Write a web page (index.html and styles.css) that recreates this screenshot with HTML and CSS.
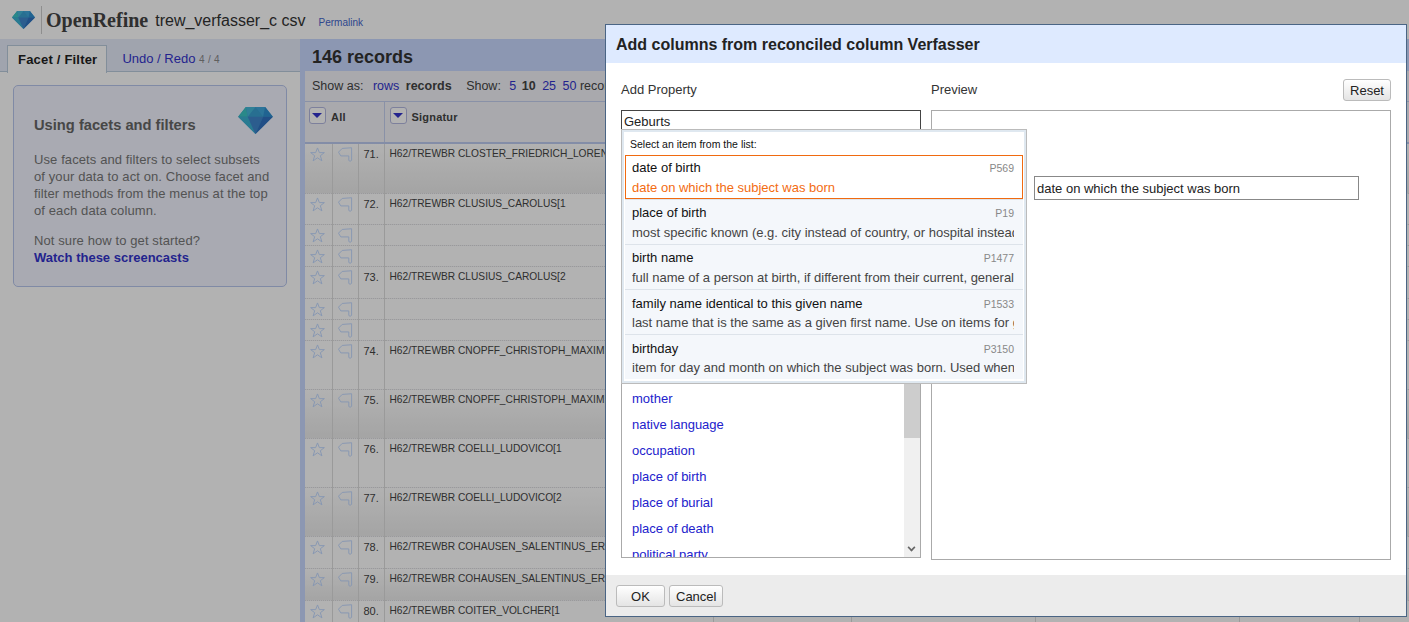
FILE: index.html
```html
<!DOCTYPE html>
<html lang="en">
<head>
    <meta charset="UTF-8">
    <meta name="viewport" content="width=device-width, initial-scale=1.0">
    <title>OpenRefine trew_verfasser_c csv</title>
    <link rel="stylesheet" href="styles.css">
</head>
<body>
    <svg class="defs" width="0" height="0">
        <symbol id="gem" viewBox="0 0 36 28">
            <path d="M8 0H28L36 10L18 28L0 10Z" fill="#3a9fd0"/>
            <path d="M8 0L0 10H10Z" fill="#3cc4c4"/>
            <path d="M8 0L10 10L18 0Z" fill="#45b8d8"/>
            <path d="M18 0L26 10L28 0Z" fill="#3fa6dc"/>
            <path d="M28 0L26 10H36Z" fill="#2f8fd0"/>
            <path d="M0 10H10L18 28Z" fill="#3cb0d0"/>
            <path d="M10 10H26L18 28Z" fill="#3f86cc"/>
            <path d="M26 10H36L18 28Z" fill="#3070c0"/>
        </symbol>
        <symbol id="star" viewBox="0 0 16 16">
            <path d="M8 1L10 6H15.300L11 9.300L12.700 14.800L8 11.500L3.300 14.800L5 9.300L.7 6H6Z" fill="none" stroke="currentColor"/>
        </symbol>
        <symbol id="flag" viewBox="0 0 16 16">
            <path d="M.5 5.500L4.500 1.500L14.500 .8V14C13.500 15.800 12 15.500 11.500 14V9.500H3L.5 5.500Z" fill="none" stroke="currentColor"/>
        </symbol>
    </svg>

    <div class="header">
        <svg class="logo-gem"><use href="#gem"/></svg>
        <span class="logo-text">OpenRefine</span>
        <span class="project-name">trew_verfasser_c csv</span>
        <a class="permalink" href="#">Permalink</a>
    </div>

    <div class="main">
        <div class="left-panel">
            <div class="tabs">
                <a class="tab tab-active" href="#">Facet / Filter</a>
                <a class="tab" href="#">Undo / Redo <span class="tab-count">4 / 4</span></a>
            </div>
            <div class="help-box">
                <svg class="help-gem"><use href="#gem"/></svg>
                <h2>Using facets and filters</h2>
                <p>Use facets and filters to select subsets of your data to act on. Choose facet and filter methods from the menus at the top of each data column.</p>
                <p class="help-last">Not sure how to get started?<br><a href="#">Watch these screencasts</a></p>
            </div>
        </div>

        <div class="right-panel">
            <div class="summary">146 records</div>
            <div class="inner">
                <div class="view-bar">
                    Show as: <a href="#">rows</a> <b>records</b>
                    <span class="view-show">Show: <a href="#">5</a> <b>10</b> <a href="#">25</a> <a href="#">50</a> records</span>
                </div>
                <table class="data-table">
                    <colgroup>
                        <col class="col-star"><col class="col-flag"><col class="col-num">
                        <col class="col-sig"><col class="col-b"><col class="col-c"><col class="col-d"><col class="col-e"><col>
                    </colgroup>
                    <tr class="head">
                        <th colspan="3"><span class="col-menu"></span>All</th>
                        <th><span class="col-menu"></span>Signatur</th>
                        <th></th><th></th><th></th><th></th><th></th>
                    </tr>
                    <tr class="shade h51"><td><svg class="i-star"><use href="#star"/></svg></td><td><svg class="i-flag"><use href="#flag"/></svg></td><td>71.</td><td class="sig">H62/TREWBR CLOSTER_FRIEDRICH_LORENZ</td><td></td><td></td><td></td><td></td><td></td></tr>
                    <tr class="h31"><td><svg class="i-star"><use href="#star"/></svg></td><td><svg class="i-flag"><use href="#flag"/></svg></td><td>72.</td><td class="sig">H62/TREWBR CLUSIUS_CAROLUS[1</td><td></td><td></td><td></td><td></td><td></td></tr>
                    <tr class="h21"><td><svg class="i-star"><use href="#star"/></svg></td><td><svg class="i-flag"><use href="#flag"/></svg></td><td></td><td></td><td></td><td></td><td></td><td></td><td></td></tr>
                    <tr class="h21"><td><svg class="i-star"><use href="#star"/></svg></td><td><svg class="i-flag"><use href="#flag"/></svg></td><td></td><td></td><td></td><td></td><td></td><td></td><td></td></tr>
                    <tr class="h32"><td><svg class="i-star"><use href="#star"/></svg></td><td><svg class="i-flag"><use href="#flag"/></svg></td><td>73.</td><td class="sig">H62/TREWBR CLUSIUS_CAROLUS[2</td><td></td><td></td><td></td><td></td><td></td></tr>
                    <tr class="h21"><td><svg class="i-star"><use href="#star"/></svg></td><td><svg class="i-flag"><use href="#flag"/></svg></td><td></td><td></td><td></td><td></td><td></td><td></td><td></td></tr>
                    <tr class="h21"><td><svg class="i-star"><use href="#star"/></svg></td><td><svg class="i-flag"><use href="#flag"/></svg></td><td></td><td></td><td></td><td></td><td></td><td></td><td></td></tr>
                    <tr class="h49"><td><svg class="i-star"><use href="#star"/></svg></td><td><svg class="i-flag"><use href="#flag"/></svg></td><td>74.</td><td class="sig">H62/TREWBR CNOPFF_CHRISTOPH_MAXIMILIAN</td><td></td><td></td><td></td><td></td><td></td></tr>
                    <tr class="shade h49"><td><svg class="i-star"><use href="#star"/></svg></td><td><svg class="i-flag"><use href="#flag"/></svg></td><td>75.</td><td class="sig">H62/TREWBR CNOPFF_CHRISTOPH_MAXIMILIAN</td><td></td><td></td><td></td><td></td><td></td></tr>
                    <tr class="h49"><td><svg class="i-star"><use href="#star"/></svg></td><td><svg class="i-flag"><use href="#flag"/></svg></td><td>76.</td><td class="sig">H62/TREWBR COELLI_LUDOVICO[1</td><td></td><td></td><td></td><td></td><td></td></tr>
                    <tr class="shade h49"><td><svg class="i-star"><use href="#star"/></svg></td><td><svg class="i-flag"><use href="#flag"/></svg></td><td>77.</td><td class="sig">H62/TREWBR COELLI_LUDOVICO[2</td><td></td><td></td><td></td><td></td><td></td></tr>
                    <tr class="h32"><td><svg class="i-star"><use href="#star"/></svg></td><td><svg class="i-flag"><use href="#flag"/></svg></td><td>78.</td><td class="sig">H62/TREWBR COHAUSEN_SALENTINUS_ERNST</td><td></td><td></td><td></td><td></td><td></td></tr>
                    <tr class="shade h32"><td><svg class="i-star"><use href="#star"/></svg></td><td><svg class="i-flag"><use href="#flag"/></svg></td><td>79.</td><td class="sig">H62/TREWBR COHAUSEN_SALENTINUS_ERNST</td><td></td><td></td><td></td><td></td><td></td></tr>
                    <tr class="h32"><td><svg class="i-star"><use href="#star"/></svg></td><td><svg class="i-flag"><use href="#flag"/></svg></td><td>80.</td><td class="sig">H62/TREWBR COITER_VOLCHER[1</td><td></td><td></td><td></td><td></td><td></td></tr>
                </table>
            </div>
        </div>
    </div>

    <div class="overlay"></div>

    <div class="dialog">
        <div class="dialog-title">Add columns from reconciled column Verfasser</div>
        <div class="dialog-body">
            <div class="col-left">
                <div class="col-label">Add Property</div>
                <input class="prop-input" type="text" value="Geburts">
                <div class="prop-list">
                    <a href="#">mother</a>
                    <a href="#">native language</a>
                    <a href="#">occupation</a>
                    <a href="#">place of birth</a>
                    <a href="#">place of burial</a>
                    <a href="#">place of death</a>
                    <a href="#">political party</a>
                    <div class="scrollbar"><div class="thumb"></div><span class="scroll-down"></span></div>
                </div>
            </div>
            <div class="col-right">
                <div class="col-label preview-label">Preview <button class="btn btn-reset">Reset</button></div>
                <div class="preview-box">
                    <input class="preview-input" type="text" value="date on which the subject was born">
                </div>
            </div>
        </div>
        <div class="dialog-footer">
            <button class="btn btn-ok">OK</button>
            <button class="btn btn-cancel">Cancel</button>
        </div>
    </div>

    <div class="suggest">
        <div class="suggest-status">Select an item from the list:</div>
        <div class="suggest-item selected">
            <div class="item-top"><span>date of birth</span><span class="item-id">P569</span></div>
            <div class="item-desc">date on which the subject was born</div>
        </div>
        <div class="suggest-item">
            <div class="item-top"><span>place of birth</span><span class="item-id">P19</span></div>
            <div class="item-desc">most specific known (e.g. city instead of country, or hospital instead of city)</div>
        </div>
        <div class="suggest-item">
            <div class="item-top"><span>birth name</span><span class="item-id">P1477</span></div>
            <div class="item-desc">full name of a person at birth, if different from their current, generally used name</div>
        </div>
        <div class="suggest-item suggest-low">
            <div class="item-top"><span>family name identical to this given name</span><span class="item-id">P1533</span></div>
            <div class="item-desc">last name that is the same as a given first name. Use on items for given names</div>
        </div>
        <div class="suggest-item suggest-low">
            <div class="item-top"><span>birthday</span><span class="item-id">P3150</span></div>
            <div class="item-desc">item for day and month on which the subject was born. Used when the exact date is known</div>
        </div>
    </div>
</body>
</html>
```

FILE: styles.css
```css
html, body { margin: 0; height: 100%; overflow: hidden; }
body { font-family: "Liberation Sans", Arial, sans-serif; font-size: 12px; color: #222; background: #fff; }
a { color: #3333cc; text-decoration: none; }
.defs { position: absolute; }

/* page behind the dialog */
.header { height: 39px; display: flex; align-items: center; padding-left: 12px; box-sizing: border-box; }
.logo-gem { width: 23px; height: 18px; margin-right: 6px; }
.logo-text { font-family: "Liberation Serif", serif; font-weight: bold; font-size: 20px; color: #444; border-left: 1px solid #ccc; padding-left: 4px; line-height: 28px; margin-top: 1px; }
.project-name { font-size: 16px; margin: 3px 0 0 7px; color: #333; }
.permalink { font-size: 10px; margin-left: 13px; margin-top: 6px; color: #4466cc; }

.main { display: flex; height: 583px; }
.left-panel { width: 300px; flex: none; }
.tabs { height: 33px; box-sizing: border-box; background: #e6ebfa; border-bottom: 1px solid #bcd; display: flex; padding: 6px 0 0 7px; color: #33c; }
.tab { font-size: 13px; line-height: 27px; padding: 0 11px 0 10px; margin-right: 5px; height: 27px; }
.tab-active { background: #fff; color: #222; font-weight: bold; letter-spacing: .2px; padding-right: 9px; border: 1px solid #bcd; border-bottom: none; }
.tab-count { font-size: 10px; color: #888; letter-spacing: .3px; }
.help-box { position: relative; margin: 13px 13px 0; width: 238px; height: 200px; background: #f2f4ff; border: 1px solid #b8c6ec; border-radius: 5px; padding: 0 14px 0 20px; color: #777; font-size: 13px; line-height: 17px; letter-spacing: .1px; }
.help-box h2 { margin: 29px 0 0; font-size: 14.700px; line-height: 20px; color: #666; letter-spacing: 0; }
.help-box p { margin: 16px 0 0; }
.help-box .help-last { margin-top: 13px; }
.help-box .help-last a { font-weight: bold; letter-spacing: 0; }
.help-gem { position: absolute; left: 224px; top: 21px; width: 35px; height: 27px; }

.right-panel { flex: 1; background: #c9d8ff; padding-left: 5px; overflow: hidden; min-width: 0; }
.summary { height: 32px; font-size: 18px; font-weight: bold; line-height: 37px; padding-left: 7px; color: #333; }
.inner { background: #f2f3f8; height: 551px; overflow: hidden; }
.view-bar { height: 30px; line-height: 30px; padding-left: 7px; font-size: 12.500px; color: #444; white-space: nowrap; }
.view-bar > a { margin-left: 6px; }
.view-bar > b { margin-left: 3px; }
.view-show { margin-left: 11px; }
.view-show a { margin-left: 3px; }
.view-show a:first-child { margin-left: 5px; }
.view-show b { margin-left: 2px; }

.data-table { border-collapse: collapse; table-layout: fixed; width: 1104px; font-size: 11px; color: #444; }
.col-star { width: 27px; }
.col-flag { width: 26px; }
.col-num { width: 26px; }
.col-sig { width: 329px; }
.col-b { width: 138px; }
.col-c { width: 184px; }
.col-d { width: 204px; }
.col-e { width: 120px; }
.data-table td { border-left: 1px solid #ddd; border-bottom: 1px dotted #ddd; padding: 3px 0 0 5px; vertical-align: top; line-height: 14px; white-space: nowrap; overflow: hidden; }
.data-table td:first-child { border-left: none; padding-left: 5px; }
.data-table td.sig { font-size: 10.200px; }
.data-table tr { background: #fff; }
.data-table tr.shade { background: linear-gradient(#fff, #ebebeb); }
.data-table tr.head { height: 41px; background: #f2f3f8; }
.data-table th { border-top: 1px solid #c4d0f0; border-bottom: 2px solid #bccaf0; border-left: 1px solid #c4d0f0; text-align: left; vertical-align: top; padding: 5px 0 0 5px; font-size: 11px; line-height: 21px; color: #444; letter-spacing: .2px; }
.data-table th:first-child { border-left: none; padding-left: 4px; }
.col-menu { display: inline-block; position: relative; width: 17px; height: 17px; box-sizing: border-box; border: 1px solid #b4b8e0; border-radius: 3px; background: #fff; margin-right: 5px; vertical-align: top; }
.col-menu::after { content: ""; position: absolute; left: 2px; top: 5px; border: 5px solid transparent; border-top: 5px solid #33c; border-bottom: none; }
.h51 { height: 51px; }
.h49 { height: 49px; }
.h32 { height: 32px; }
.h31 { height: 31px; }
.h21 { height: 21px; }
.i-star, .i-flag { width: 15px; height: 15px; color: #c0d8ff; display: block; }

.overlay { position: absolute; inset: 0; background: rgba(0, 0, 0, .3); }

/* dialog */
.dialog { position: absolute; left: 605px; top: 24px; width: 802px; height: 593px; box-sizing: border-box; background: #fff; border: 1px solid #4a6585; display: flex; flex-direction: column; font-size: 13px; color: #333; }
.dialog-title { height: 38px; flex: none; background: #deeaff; font-size: 16px; font-weight: bold; line-height: 39px; padding-left: 10px; color: #222; }
.dialog-body { flex: 1; display: flex; padding: 0 15px; gap: 10px; min-height: 0; }
.col-left { width: 300px; flex: none; }
.col-right { width: 460px; flex: none; }
.col-label { height: 47px; line-height: 54px; font-size: 13px; }
.preview-label { display: flex; justify-content: space-between; }
.preview-label .btn { margin-top: 16px; }
.prop-input { display: block; box-sizing: border-box; width: 300px; height: 22px; margin: 0; padding: 0 2px; border: 1px solid #444; font: 13px "Liberation Sans", Arial, sans-serif; color: #222; outline: none; }
.prop-list { position: relative; width: 300px; height: 426px; box-sizing: border-box; border: 1px solid #aaa; border-top: none; overflow: hidden; padding: 254px 0 0 10px; }
.prop-list a { display: block; height: 26px; line-height: 26px; font-size: 13px; color: #2222cc; }
.scrollbar { position: absolute; right: 0; top: 0; bottom: 0; width: 16px; background: #f0f0f0; }
.thumb { height: 306px; background: #cdcdcd; }
.scroll-down { position: absolute; left: 4px; bottom: 6px; width: 5px; height: 5px; border-right: 2px solid #666; border-bottom: 2px solid #666; transform: rotate(45deg) scale(.8); }
.preview-box { box-sizing: border-box; width: 460px; height: 450px; border: 1px solid #aaa; padding: 65px 0 0 102px; }
.preview-input { display: block; box-sizing: border-box; width: 325px; height: 24px; padding: 0 2px; border: 1px solid #888; font: 13px "Liberation Sans", Arial, sans-serif; color: #222; }
.dialog-footer { height: 41px; flex: none; background: #ececec; padding: 10px 0 0 10px; box-sizing: border-box; display: flex; gap: 4px; align-items: flex-start; }
.btn { height: 22px; box-sizing: border-box; padding: 0 6px; border: 1px solid #bbb; border-radius: 3px; background: linear-gradient(#fff, #e4e4e4); font: 13px "Liberation Sans", Arial, sans-serif; color: #222; }
.btn-ok { width: 49px; }
.btn-cancel { width: 54px; }
.btn-reset { width: 48px; }

/* suggest popup */
.suggest { position: absolute; left: 621px; top: 129px; width: 406px; height: 255px; box-sizing: border-box; background: #fff; border: 1px solid #bbb; padding: 3px 3px 0 3px; font-size: 12px; }
.suggest::before { content: ""; position: absolute; inset: 0; border: 2px solid #dfe8f0; pointer-events: none; }
.suggest-status { height: 22px; line-height: 23px; font-size: 10.500px; padding-left: 5px; color: #111; }
.suggest-item { position: relative; height: 45px; box-sizing: border-box; background: #f4f7fb; border-top: 1px solid #dde3ea; padding: 3px 9px 0 7px; color: #222; overflow: hidden; white-space: nowrap; }
.suggest-item.selected { height: 44px; background: #fff; border: 1px solid #f06a10; padding: 2px 8px 0 6px; }
.suggest-item.selected .item-desc { color: #f36c12; }
.suggest-low .item-top { margin: 1px 0 -1px; }
.item-top { display: flex; justify-content: space-between; height: 20px; line-height: 20px; color: #111; font-size: 13px; }
.item-id { font-size: 10.500px; color: #888; }
.item-desc { line-height: 20px; font-size: 13px; color: #444; overflow: hidden; }
```
